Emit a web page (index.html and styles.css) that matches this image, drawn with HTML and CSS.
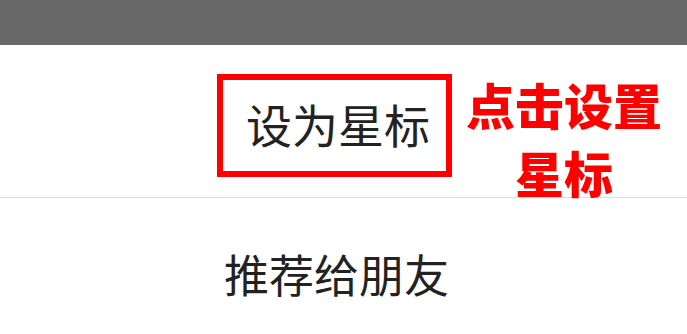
FILE: index.html
```html
<!DOCTYPE html>
<html lang="zh-CN">
<head>
<meta charset="utf-8">
<title>设为星标</title>
<link rel="stylesheet" href="styles.css">
</head>
<body>
<div class="topbar"></div>
<div class="menu">
  <div class="item item-star">
    <span class="highlight">设为星标</span>
  </div>
  <div class="item item-share">
    <span class="label">推荐给朋友</span>
  </div>
  <div class="note">点击设置<br>星标</div>
</div>
</body>
</html>
```
FILE: styles.css
```css
html, body {
  margin: 0;
  padding: 0;
  background: #ffffff;
}
body {
  width: 687px;
  height: 334px;
  overflow: hidden;
  font-family: "Noto Sans CJK SC", "Noto Sans", sans-serif;
  color: #222222;
}
.topbar {
  height: 45px;
  background: #686868;
}
.menu {
  position: relative;
}
.item {
  box-sizing: border-box;
}
.item-star {
  height: 153px;
  padding: 29px 0 0 217px;
  border-bottom: 1px solid #dddddd;
}
.highlight {
  display: inline-block;
  border: 6px solid #ff0000;
  padding: 20px 16px 25px 23px;
  font-size: 46px;
  line-height: 46px;
  font-weight: 400;
  letter-spacing: 0;
}
.item-share {
  padding: 53px 0 0 224px;
}
.label {
  font-size: 45px;
  line-height: 46px;
  font-weight: 400;
}
.note {
  position: absolute;
  left: 465px;
  top: 25px;
  width: 198px;
  text-align: center;
  color: #ff0000;
  font-size: 49px;
  line-height: 68px;
  font-weight: 900;
}
```
